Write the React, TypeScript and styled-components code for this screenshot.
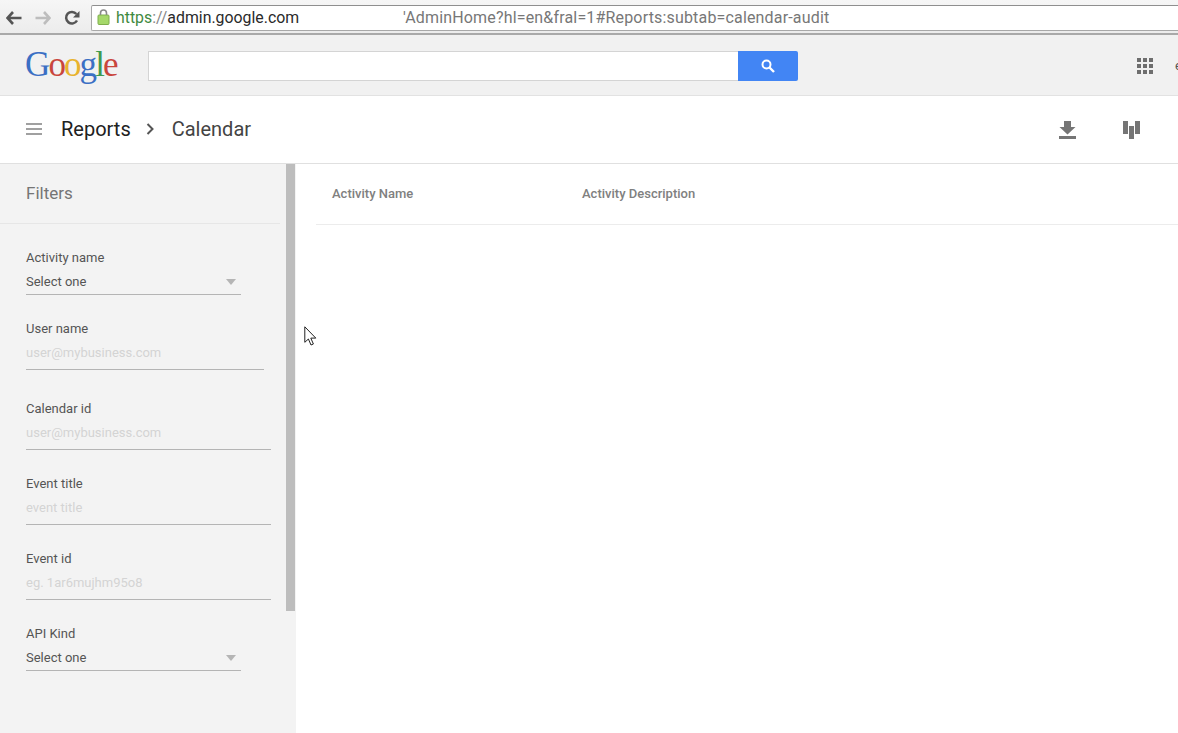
import styled, { createGlobalStyle } from "styled-components";

const GlobalStyle = createGlobalStyle`
  html, body {
    margin: 0;
    padding: 0;
    height: 100%;
    overflow: hidden;
    background: #fff;
    font-family: Roboto, "Liberation Sans", sans-serif;
  }
`;

const Page = styled.div`
  width: 1178px;
  height: 733px;
  display: flex;
  flex-direction: column;
  overflow: hidden;
  position: relative;
`;

const BrowserBar = styled.div`
  height: 35px;
  flex: none;
  box-sizing: border-box;
  padding: 5px 0 2px 6px;
  display: flex;
  align-items: stretch;
  background: linear-gradient(#f6f6f6, #ececec);
  border-bottom: 2px solid #a9a9a9;
`;

const NavButtons = styled.div`
  width: 85px;
  flex: none;
  display: flex;
  align-items: center;
  gap: 13px;
`;

const UrlBox = styled.div`
  flex: 1;
  display: flex;
  align-items: center;
  box-sizing: border-box;
  padding: 0 0 2px 5px;
  background: #fff;
  border: 1px solid #a8a8a8;
  border-top-color: #8f8f8f;
  border-right: none;
  border-radius: 2px 0 0 2px;
  font-size: 15.85px;
  white-space: nowrap;
`;

const Https = styled.span`
  color: #3f8a3f;
  margin-left: 6px;
`;

const Slashes = styled.span`
  color: #888;
`;

const Host = styled.span`
  color: #2a2a2a;
`;

const UrlPath = styled.span`
  color: #777;
  margin-left: 104px;
  font-size: 16px;
  letter-spacing: 0.17px;
`;

const AppHeader = styled.header`
  height: 61px;
  flex: none;
  box-sizing: border-box;
  display: flex;
  align-items: center;
  padding: 2px 0 0 26px;
  background: #f1f1f1;
  border-bottom: 1px solid #e2e2e2;
`;

const Logo = styled.div`
  width: 122px;
  flex: none;
  font-family: "Liberation Serif", serif;
  font-size: 35px;
  letter-spacing: -1.9px;
  line-height: 40px;
  margin: -2px 0 0 -1px;
  padding-right: 1px;
  box-sizing: content-box;
`;

const LogoLetter = styled.span<{ $color: string }>`
  color: ${(p) => p.$color};
`;

const SearchInput = styled.div`
  width: 590px;
  height: 30px;
  box-sizing: border-box;
  background: #fff;
  border: 1px solid #d4d4d4;
  border-right: none;
`;

const SearchButton = styled.div`
  width: 60px;
  height: 30px;
  display: flex;
  align-items: center;
  justify-content: center;
  background: #4285f4;
  border-radius: 0 2px 2px 0;
`;

const AppsGrid = styled.div`
  margin: 0 25px 0 auto;
  display: grid;
  grid-template-columns: repeat(3, 4px);
  grid-auto-rows: 4px;
  gap: 2px;
`;

const AppsDot = styled.span`
  background: #6e6e6e;
`;

const AccountStub = styled.span`
  position: absolute;
  left: 1175px;
  top: 58px;
  font-size: 13px;
  color: #555;
`;

const Breadcrumb = styled.div`
  height: 68px;
  flex: none;
  box-sizing: border-box;
  display: flex;
  align-items: center;
  padding: 0 0 2px 26px;
  background: #fff;
  border-bottom: 1px solid #e0e0e0;
`;

const MenuIcon = styled.div`
  width: 16px;
  height: 12px;
  flex: none;
  margin-right: 19px;
  border-top: 2px solid #a0a0a0;
  border-bottom: 2px solid #a0a0a0;
  box-sizing: border-box;
  position: relative;

  &::after {
    content: "";
    position: absolute;
    left: 0;
    right: 0;
    top: 3px;
    height: 2px;
    background: #a0a0a0;
  }
`;

const Crumb = styled.span<{ $current?: boolean }>`
  font-size: 20px;
  color: ${(p) => (p.$current ? "#444" : "#212121")};
`;

const CrumbArrow = styled.svg`
  margin: 1px 17px 0 15px;
`;

const Actions = styled.div`
  margin-left: auto;
  display: flex;
  align-items: center;
  gap: 47px;
  padding-right: 38px;
  padding-top: 3px;
`;

const Body = styled.div`
  flex: 1;
  display: flex;
  min-height: 0;
  position: relative;
`;

const Sidebar = styled.aside`
  width: 296px;
  flex: none;
  background: #f3f3f3;
  position: relative;
`;

const Scrollbar = styled.div`
  position: absolute;
  top: 0;
  right: 1px;
  width: 9px;
  height: 447px;
  background: #bdbdbd;
`;

const FiltersTitle = styled.div`
  width: 280px;
  height: 60px;
  box-sizing: border-box;
  padding: 20px 0 0 26px;
  font-size: 17px;
  line-height: 19px;
  color: #757575;
  border-bottom: 1px solid #e6e6e6;
`;

const FieldList = styled.div`
  padding: 26px 0 0 26px;
`;

const Field = styled.div<{ $width: number; $gap: number }>`
  width: ${(p) => p.$width}px;
  margin-bottom: ${(p) => p.$gap}px;
`;

const FieldLabel = styled.div`
  font-size: 13px;
  line-height: 16px;
  color: #555;
`;

const FieldValue = styled.div<{ $select?: boolean }>`
  height: ${(p) => (p.$select ? 29 : 33)}px;
  box-sizing: border-box;
  padding-top: 8px;
  display: flex;
  justify-content: space-between;
  font-size: 13px;
  line-height: 16px;
  color: ${(p) => (p.$select ? "#555" : "#d4d4d4")};
  border-bottom: 1px solid #b4b4b4;
`;

const Caret = styled.span`
  width: 0;
  height: 0;
  margin: 5px 5px 0 0;
  border-left: 5px solid transparent;
  border-right: 5px solid transparent;
  border-top: 6px solid #b5b5b5;
`;

const Content = styled.main`
  flex: 1;
  padding-left: 20px;
  background: #fff;
`;

const TableHead = styled.div`
  height: 61px;
  box-sizing: border-box;
  display: grid;
  grid-template-columns: 250px 1fr;
  align-items: center;
  padding: 0 0 2px 16px;
  font-size: 13px;
  font-weight: 500;
  color: #808080;
  border-bottom: 1px solid #ececec;
`;

const Pointer = styled.svg`
  position: absolute;
  left: 304px;
  top: 326px;
`;

const filters = [
  { label: "Activity name", value: "Select one", width: 215, gap: 26, select: true },
  { label: "User name", value: "user@mybusiness.com", width: 238, gap: 31 },
  { label: "Calendar id", value: "user@mybusiness.com", width: 245, gap: 26 },
  { label: "Event title", value: "event title", width: 245, gap: 26 },
  { label: "Event id", value: "eg. 1ar6mujhm95o8", width: 245, gap: 26 },
  { label: "API Kind", value: "Select one", width: 215, gap: 0, select: true },
];

const logoLetters = [
  ["G", "#3b6fc4"],
  ["o", "#c9463d"],
  ["o", "#e8b32e"],
  ["g", "#3b6fc4"],
  ["l", "#3f9a4f"],
  ["e", "#c9463d"],
];

export default function App() {
  return (
    <Page>
      <GlobalStyle />
      <BrowserBar>
        <NavButtons>
          <svg width="16" height="14" viewBox="0 0 16 14">
            <path d="M7 1 1.500 7 7 13M2 7h13.500" fill="none" stroke="#555" strokeWidth="2.6" />
          </svg>
          <svg width="16" height="14" viewBox="0 0 16 14">
            <path d="M9 1l5.500 6L9 13M14 7H.5" fill="none" stroke="#bdbdbd" strokeWidth="2.6" />
          </svg>
          <svg width="16" height="16" viewBox="0 0 16 16">
            <path d="M13 10.500A5.800 5.800 0 1 1 12.400 4" fill="none" stroke="#555" strokeWidth="2.5" />
            <path d="M15.500 1v6.500H9z" fill="#555" />
          </svg>
        </NavButtons>
        <UrlBox>
          <svg width="13" height="16" viewBox="0 0 13 16">
            <rect x="1" y="6" width="11" height="9.500" rx="1" fill="#a5d86a" stroke="#7fae4c" />
            <path d="M3.500 6V4a3 3 0 0 1 6 0v2" fill="none" stroke="#8a8a8a" strokeWidth="1.6" />
          </svg>
          <Https>https</Https>
          <Slashes>://</Slashes>
          <Host>admin.google.com</Host>
          <UrlPath>'AdminHome?hl=en&amp;fral=1#Reports:subtab=calendar-audit</UrlPath>
        </UrlBox>
      </BrowserBar>

      <AppHeader>
        <Logo>
          {logoLetters.map(([letter, color], i) => (
            <LogoLetter key={i} $color={color}>
              {letter}
            </LogoLetter>
          ))}
        </Logo>
        <SearchInput />
        <SearchButton>
          <svg width="16" height="16" viewBox="0 0 16 16">
            <circle cx="6.500" cy="6.500" r="4" fill="none" stroke="#fff" strokeWidth="2" />
            <path d="M9.500 9.500 14 14" stroke="#fff" strokeWidth="2.400" />
          </svg>
        </SearchButton>
        <AppsGrid>
          {Array.from({ length: 9 }).map((_, i) => (
            <AppsDot key={i} />
          ))}
        </AppsGrid>
        <AccountStub>e</AccountStub>
      </AppHeader>

      <Breadcrumb>
        <MenuIcon />
        <Crumb>Reports</Crumb>
        <CrumbArrow width="9" height="12" viewBox="0 0 9 12">
          <path d="M1.500 1 6.500 6 1.500 11" fill="none" stroke="#555" strokeWidth="2" />
        </CrumbArrow>
        <Crumb $current>Calendar</Crumb>
        <Actions>
          <svg width="17" height="18" viewBox="0 0 17 18">
            <path d="M5 0h7v6h4.500L8.500 13.500.5 6H5z" fill="#757575" />
            <rect x="0" y="15" width="17" height="3" fill="#757575" />
          </svg>
          <svg width="17" height="18" viewBox="0 0 17 18">
            <rect x="0" y="0" width="5" height="13" fill="#757575" />
            <rect x="6" y="5" width="5" height="13" fill="#757575" />
            <rect x="12" y="0" width="5" height="13" fill="#757575" />
          </svg>
        </Actions>
      </Breadcrumb>

      <Body>
        <Sidebar>
          <FiltersTitle>Filters</FiltersTitle>
          <FieldList>
            {filters.map((f) => (
              <Field key={f.label} $width={f.width} $gap={f.gap}>
                <FieldLabel>{f.label}</FieldLabel>
                <FieldValue $select={f.select}>
                  {f.value}
                  {f.select && <Caret />}
                </FieldValue>
              </Field>
            ))}
          </FieldList>
          <Scrollbar />
        </Sidebar>
        <Content>
          <TableHead>
            <span>Activity Name</span>
            <span>Activity Description</span>
          </TableHead>
        </Content>
      </Body>

      <Pointer width="14" height="20" viewBox="0 0 14 20">
        <path
          d="M.8.8v15.500l3.600-3.300 2.600 6 2.400-1-2.600-5.900h5z"
          fill="#fff"
          stroke="#222"
          strokeWidth="1"
        />
      </Pointer>
    </Page>
  );
}
